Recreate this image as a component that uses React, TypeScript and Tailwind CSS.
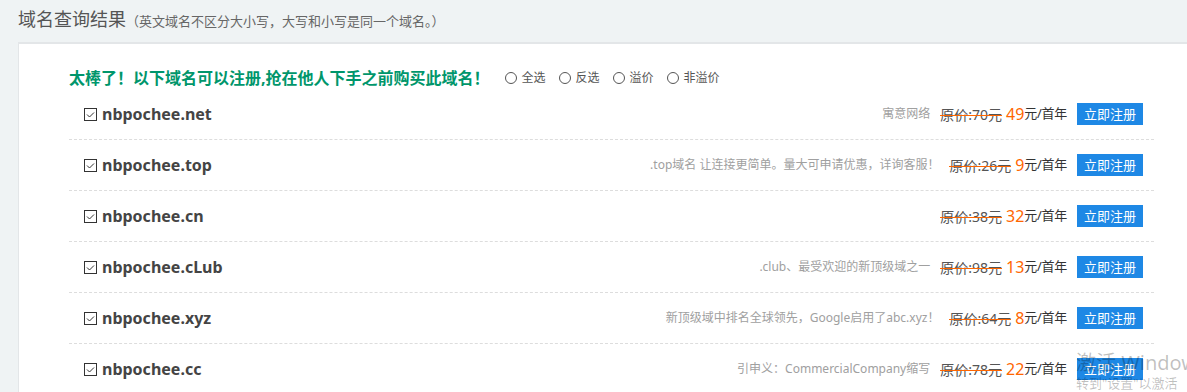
import React from "react";

const rows = [
  { name: "nbpochee.net", desc: "寓意网络", orig: "70", price: "49" },
  { name: "nbpochee.top", desc: ".top域名 让连接更简单。量大可申请优惠，详询客服！", orig: "26", price: "9" },
  { name: "nbpochee.cn", desc: "", orig: "38", price: "32" },
  { name: "nbpochee.cLub", desc: ".club、最受欢迎的新顶级域之一", orig: "98", price: "13" },
  { name: "nbpochee.xyz", desc: "新顶级域中排名全球领先，Google启用了abc.xyz！", orig: "64", price: "8" },
  { name: "nbpochee.cc", desc: "引申义：CommercialCompany缩写", orig: "78", price: "22" },
];

function Check() {
  return (
    <svg width="13" height="13" viewBox="0 0 13 13" className="shrink-0">
      <rect x="0.5" y="0.5" width="12" height="12" fill="#fff" stroke="#333" />
      <path d="M3 6.5 L5.5 9 L10 4.5" fill="none" stroke="#333" strokeWidth="1" />
    </svg>
  );
}

function Radio({ label }: { label: string }) {
  return (
    <label className="flex items-center gap-[5px] text-[12px] text-[#555]">
      <span className="w-[12px] h-[12px] rounded-full border border-[#555] bg-white" />
      {label}
    </label>
  );
}

export default function App() {
  return (
    <div
      className="w-[1187px] h-[392px] overflow-hidden bg-[#eff3f4] relative"
      style={{ fontFamily: '"Noto Sans", "Noto Sans CJK SC", sans-serif' }}
    >
      <div className="h-[42px] pl-[18px] pt-[6px] flex items-baseline">
        <span className="text-[18px] text-[#555] leading-[26px]">域名查询结果</span>
        <span className="text-[13px] text-[#666]">（英文域名不区分大小写，大写和小写是同一个域名。）</span>
      </div>
      <div className="ml-[18px] bg-white border-t-2 border-l border-[#e3e6e8] h-[350px] pl-[50px]">
        <div className="h-[45px] pt-[22px] flex items-center">
          <span className="text-[16px] font-bold text-[#00966b] leading-[20px]">
            太棒了！以下域名可以注册,抢在他人下手之前购买此域名！
          </span>
          <div className="flex items-center gap-[13px] ml-[15px]">
            <Radio label="全选" />
            <Radio label="反选" />
            <Radio label="溢价" />
            <Radio label="非溢价" />
          </div>
        </div>
        <div className="w-[1085px]">
          {rows.map((r) => (
            <div
              key={r.name}
              className="h-[51px] border-b border-dashed border-[#ddd] flex items-center pl-[15px] pr-[11px]"
            >
              <Check />
              <span className="ml-[5px] text-[16px] font-bold text-[#444]">{r.name}</span>
              <div className="flex-1" />
              {r.desc && (
                <span className="text-[12px] text-[#a0a0a0] mr-[10px]">{r.desc}</span>
              )}
              <span className="relative text-[14px] text-[#555]">
                原价:{r.orig}元
                <span className="absolute left-0 right-0 top-[55%] h-[1px] bg-[#f60]" />
              </span>
              <span className="text-[16px] text-[#f60] ml-[4px] leading-none">{r.price}</span>
              <span className="text-[13px] text-[#333] tracking-[-0.3px]">元/首年</span>
              <button className="ml-[10px] w-[66px] h-[22px] bg-[#1e88e5] text-white text-[13px] leading-[22px]">
                立即注册
              </button>
            </div>
          ))}
        </div>
      </div>
      <div className="absolute left-[1076px] top-[350px] text-[#000]/25 leading-tight pointer-events-none whitespace-nowrap">
        <div className="text-[20px]">激活 Windows</div>
        <div className="text-[13px]">转到"设置"以激活</div>
      </div>
    </div>
  );
}
